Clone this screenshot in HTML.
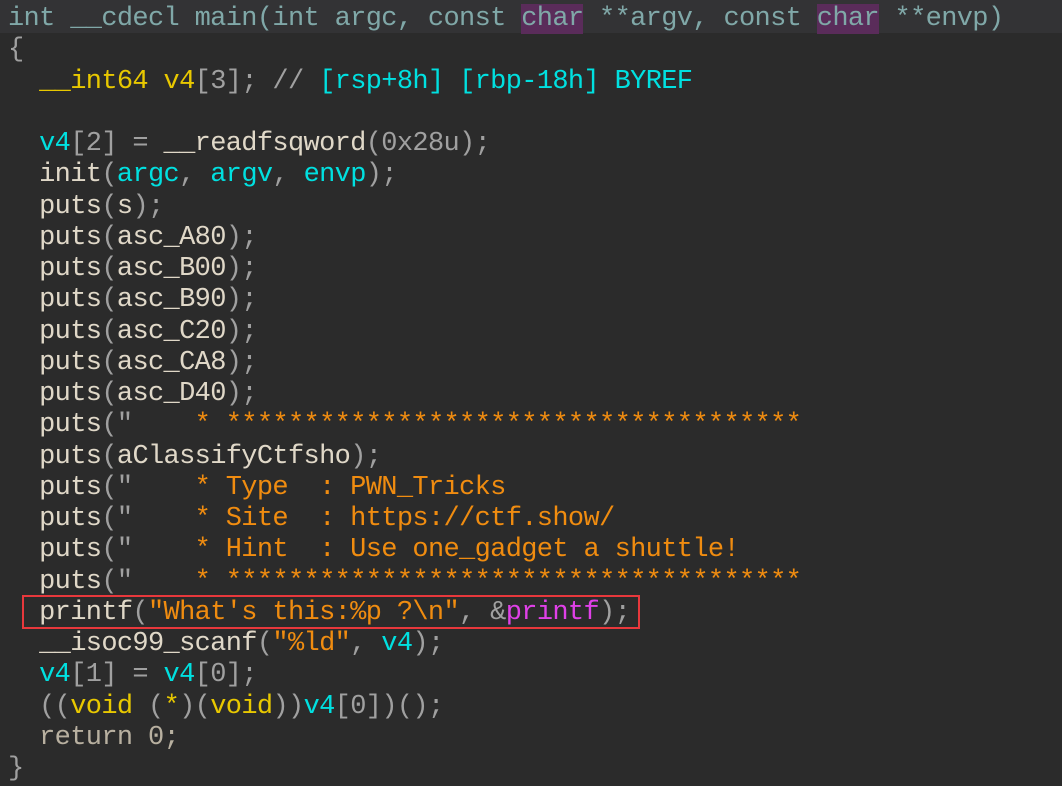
<!DOCTYPE html>
<html><head><meta charset="utf-8"><style>
body{margin:0;background:#2b2b2b;width:1062px;height:786px;overflow:hidden;position:relative}
pre{margin:0;position:absolute;left:8px;top:4px;font-family:"Liberation Mono",monospace;font-size:27px;letter-spacing:-0.65px;line-height:31.25px;color:#e0d8c8;white-space:pre}
.hd{position:absolute;left:0;top:0;width:1062px;height:33px;background:#333335}
.f{color:#80a8a8}
.p{color:#a0a0a0}
.y{color:#e8c800}
.c{color:#00e0e0}
.o{color:#f08c10}
.m{color:#e040e8}
.g{color:#b8b0a0}
.k{background:#5a2c5a}
.box{position:absolute;left:22px;top:595px;width:614px;height:30px;border:2.5px solid #e8383c}
</style></head><body>
<div class="hd"></div>
<pre><span class="f">int __cdecl main(int argc, const <span class="k">char</span> **argv, const <span class="k">char</span> **envp)</span>
<span class="p">{</span>
  <span class="y">__int64</span> <span class="y">v4</span><span class="p">[3]; //</span> <span class="c">[rsp+8h] [rbp-18h] BYREF</span>

  <span class="c">v4</span><span class="p">[2] =</span> __readfsqword<span class="p">(0x28u);</span>
  init<span class="p">(</span><span class="c">argc</span><span class="p">,</span> <span class="c">argv</span><span class="p">,</span> <span class="c">envp</span><span class="p">);</span>
  puts<span class="p">(</span>s<span class="p">);</span>
  puts<span class="p">(</span>asc_A80<span class="p">);</span>
  puts<span class="p">(</span>asc_B00<span class="p">);</span>
  puts<span class="p">(</span>asc_B90<span class="p">);</span>
  puts<span class="p">(</span>asc_C20<span class="p">);</span>
  puts<span class="p">(</span>asc_CA8<span class="p">);</span>
  puts<span class="p">(</span>asc_D40<span class="p">);</span>
  puts<span class="p">("</span><span class="o">    * *************************************</span>
  puts<span class="p">(</span>aClassifyCtfsho<span class="p">);</span>
  puts<span class="p">("</span><span class="o">    * Type  : PWN_Tricks</span>
  puts<span class="p">("</span><span class="o">    * Site  : https://ctf.show/</span>
  puts<span class="p">("</span><span class="o">    * Hint  : Use one_gadget a shuttle!</span>
  puts<span class="p">("</span><span class="o">    * *************************************</span>
  printf<span class="p">(</span><span class="o">"What's this:%p ?\n"</span><span class="p">, &amp;</span><span class="m">printf</span><span class="p">);</span>
  __isoc99_scanf<span class="p">(</span><span class="o">"%ld"</span><span class="p">,</span> <span class="c">v4</span><span class="p">);</span>
  <span class="c">v4</span><span class="p">[1] =</span> <span class="c">v4</span><span class="p">[0];</span>
  <span class="p">((</span><span class="y">void</span> <span class="p">(</span><span class="y">*</span><span class="p">)(</span><span class="y">void</span><span class="p">))</span><span class="c">v4</span><span class="p">[0])();</span>
  <span class="g">return 0;</span>
<span class="p">}</span></pre>
<div class="box"></div>
</body></html>
